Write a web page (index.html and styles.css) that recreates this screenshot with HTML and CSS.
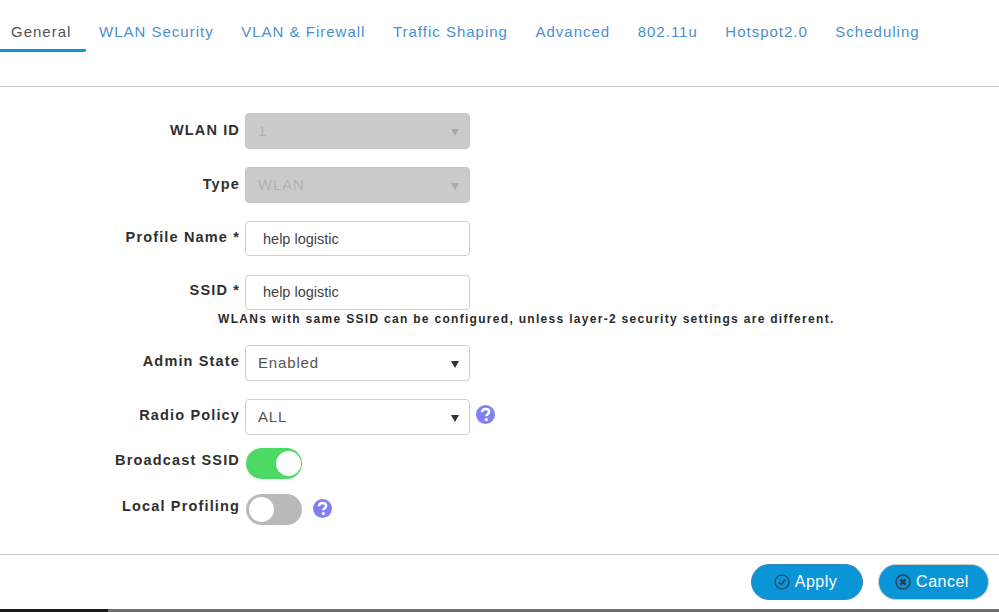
FILE: index.html
```html
<!DOCTYPE html>
<html lang="en">
<head>
<meta charset="utf-8">
<title>WLAN General</title>
<link rel="stylesheet" href="styles.css">
</head>
<body>
<div class="page">
  <nav class="tabs">
    <a class="tab active">General</a>
    <a class="tab">WLAN Security</a>
    <a class="tab">VLAN &amp; Firewall</a>
    <a class="tab">Traffic Shaping</a>
    <a class="tab">Advanced</a>
    <a class="tab">802.11u</a>
    <a class="tab">Hotspot2.0</a>
    <a class="tab">Scheduling</a>
  </nav>
  <main class="form">
    <div class="row r-select r-top">
      <label class="label">WLAN ID</label>
      <div class="control disabled"><span>1</span><i class="caret"></i></div>
    </div>
    <div class="row r-select r-top">
      <label class="label">Type</label>
      <div class="control disabled"><span>WLAN</span><i class="caret"></i></div>
    </div>
    <div class="row r-input">
      <label class="label">Profile Name *</label>
      <div class="control input"><span>help logistic</span></div>
    </div>
    <div class="row r-input r-ssid">
      <label class="label">SSID *</label>
      <div class="control input"><span>help logistic</span></div>
    </div>
    <p class="hint">WLANs with same SSID can be configured, unless layer-2 security settings are different.</p>
    <div class="row r-select">
      <label class="label">Admin State</label>
      <div class="control"><span>Enabled</span><i class="caret"></i></div>
    </div>
    <div class="row r-policy">
      <label class="label">Radio Policy</label>
      <div class="control"><span>ALL</span><i class="caret"></i></div>
      <svg class="help help-a" viewBox="0 0 20 20"><circle cx="10" cy="10" r="10" fill="#8080f5"/><path d="M6.300 7.600c0-2.200 1.700-3.500 3.800-3.500 2.200 0 3.700 1.300 3.700 3.100 0 1.500-.9 2.200-1.800 2.800-.8.500-1.100.9-1.100 1.900" fill="none" stroke="#fff" stroke-width="2.600"/><circle cx="10.900" cy="15.300" r="1.700" fill="#fff"/></svg>
    </div>
    <div class="row r-toggle">
      <label class="label">Broadcast SSID</label>
      <div class="toggle on"><i class="knob"></i></div>
    </div>
    <div class="row r-toggle">
      <label class="label">Local Profiling</label>
      <div class="toggle"><i class="knob"></i></div>
      <svg class="help help-b" viewBox="0 0 20 20"><circle cx="10" cy="10" r="10" fill="#8080f5"/><path d="M6.300 7.600c0-2.200 1.700-3.500 3.800-3.500 2.200 0 3.700 1.300 3.700 3.100 0 1.500-.9 2.200-1.800 2.800-.8.500-1.100.9-1.100 1.900" fill="none" stroke="#fff" stroke-width="2.600"/><circle cx="10.900" cy="15.300" r="1.700" fill="#fff"/></svg>
    </div>
  </main>
  <footer class="actions">
    <button class="btn apply">
      <svg class="btn-icon" viewBox="0 0 16 16"><circle cx="8" cy="8" r="7" fill="none" stroke="#24445c" stroke-width="1.200"/><path d="M4.800 8.200l2.300 2.300 4.200-4.800" fill="none" stroke="#24445c" stroke-width="1.400"/></svg>
      <span>Apply</span>
    </button>
    <button class="btn cancel">
      <svg class="btn-icon" viewBox="0 0 16 16"><circle cx="8" cy="8" r="7" fill="none" stroke="#24445c" stroke-width="1.500"/><path d="M5.400 5.400l5.200 5.200M10.600 5.400l-5.200 5.200" stroke="#2a3a4a" stroke-width="2.400"/></svg>
      <span>Cancel</span>
    </button>
  </footer>
  <div class="progress"><div class="progress-fill"></div></div>
</div>
</body>
</html>
```

FILE: styles.css
```css
* { box-sizing: border-box; }
html, body { margin: 0; padding: 0; background: #fff; }
body { font-family: "Liberation Sans", Arial, sans-serif; color: #2b2b2b; }
.page { width: 999px; height: 612px; display: flex; flex-direction: column; overflow: hidden; }

.tabs { height: 87px; display: flex; align-items: flex-start; border-bottom: 1px solid #ccc; padding-top: 11px; }
.tab { font-size: 15px; line-height: 41px; height: 41px; letter-spacing: 1px; color: #4a90d0; padding: 0 13.500px 0 14px; white-space: nowrap; }
.tab:nth-child(2) { padding-left: 13px; }
.tab.active { color: #555; padding: 0 0 0 11px; border-bottom: 3px solid #0e96d6; border-bottom-right-radius: 2px; width: 86px; }

.form { flex: 1; padding-top: 26px; display: flex; flex-direction: column; }
.row { display: flex; align-items: flex-start; }
.r-select { height: 54px; }
.r-input { height: 54px; }
.r-ssid { height: 36px; }
.r-policy { height: 49px; }
.r-toggle { height: 46px; }
.label { width: 240px; text-align: right; font-size: 14.500px; font-weight: 700; letter-spacing: 1.150px; color: #2f2f2f; line-height: 18px; padding-top: 7px; white-space: nowrap; }
.r-top .label { padding-top: 8px; }
.r-ssid .label { padding-top: 6px; }
.r-toggle .label { padding-top: 3px; }
.control { width: 225px; height: 36px; margin-left: 5px; border: 1.500px solid #cfcfcf; border-radius: 4px; display: flex; align-items: center; justify-content: space-between; padding: 0 12px; font-size: 15px; letter-spacing: .85px; color: #555; background: #fff; }
.control span { margin-bottom: 2px; }
.control.input { height: 35px; padding-left: 17px; font-size: 14.500px; letter-spacing: 0; color: #444; }
.r-input:not(.r-ssid) .control span { margin-bottom: 0; }
.control.disabled { background: #cbcbcb; color: #b2b2b2; border-color: #c6c6c6; }
.caret { width: 0; height: 0; border-left: 4px solid transparent; border-right: 4px solid transparent; border-top: 7px solid #333; margin-top: 2px; margin-right: -2px; }
.disabled .caret { border-top-color: #a9a9a9; }
.hint { margin: 0 0 18px 218px; font-size: 12px; font-weight: 700; letter-spacing: 1.300px; line-height: 16px; color: #2b2b2b; white-space: nowrap; }

.toggle { width: 56px; height: 31px; margin-left: 6px; border-radius: 16px; background: #4cd964; position: relative; }
.toggle:not(.on) { background: #b9b9b9; }
.knob { position: absolute; top: 3px; left: 3px; width: 25px; height: 25px; border-radius: 50%; background: #fff; }
.on .knob { left: 30px; }
.help { width: 19px; height: 19px; flex: none; }
.help-a { margin: 6px 0 0 6px; }
.help-b { margin: 5px 0 0 11px; }

.actions { height: 55px; margin-top: -5px; border-top: 1px solid #ccc; display: flex; justify-content: flex-end; align-items: flex-start; gap: 15px; padding: 9px 10px 0 0; }
.btn { width: 112px; height: 36px; border-radius: 18px; border: 1px solid #3a84c4; background: #0a96d6; color: #fff; font-family: inherit; font-size: 16px; letter-spacing: .5px; display: flex; align-items: center; justify-content: center; gap: 5px; padding: 0 3px 0 0; }
.btn.cancel { width: 111px; border: 1.500px solid #d3ccc6; }
.btn-icon { width: 16px; height: 16px; flex: none; }

.progress { height: 3px; background: #6e6e6e; flex: none; }
.progress-fill { width: 108px; height: 3px; background: #1a1a1a; }
```
